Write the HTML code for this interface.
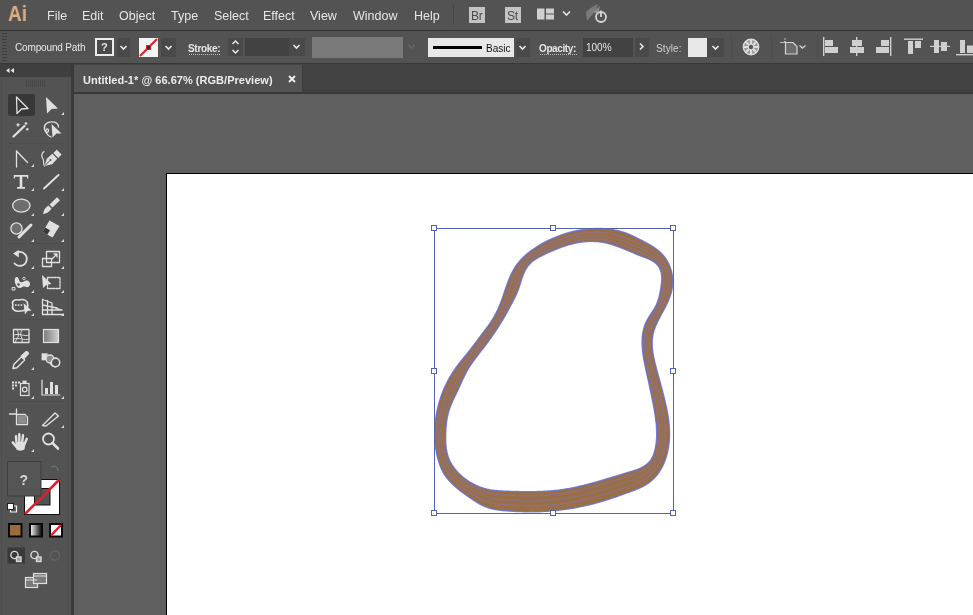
<!DOCTYPE html>
<html><head><meta charset="utf-8">
<style>
html,body{margin:0;padding:0}
.a{will-change:transform}
body{width:973px;height:615px;overflow:hidden;background:#535353;position:relative;font-family:"Liberation Sans",sans-serif;color:#e8e8e8}
.a{position:absolute}
.menu{font-size:12.5px;top:8.5px;color:#e6e6e6}
.lbl{font-size:10px;color:#e6e6e6}
svg{position:absolute;overflow:visible}
</style></head><body>
<!-- menu bar -->
<div class="a" style="left:0;top:0;width:973px;height:30px;background:#535353"></div>
<div class="a" style="left:0;top:30px;width:973px;height:1px;background:#323232"></div>
<div class="a" style="left:8px;top:1px;font-size:22px;line-height:25px;color:#dcae88;font-weight:bold;transform:scaleX(0.86);transform-origin:0 0;text-shadow:0 0 1px #8a5a3a">Ai</div>
<div class="a menu" style="left:47px">File</div>
<div class="a menu" style="left:81.5px">Edit</div>
<div class="a menu" style="left:118.5px">Object</div>
<div class="a menu" style="left:171px">Type</div>
<div class="a menu" style="left:213.5px">Select</div>
<div class="a menu" style="left:262.5px">Effect</div>
<div class="a menu" style="left:309.5px">View</div>
<div class="a menu" style="left:352.5px">Window</div>
<div class="a menu" style="left:413.5px">Help</div>

<!-- menu icons -->
<div class="a" style="left:453px;top:5px;width:1px;height:20px;background:#454545"></div>
<div class="a" style="left:469px;top:7px;width:16px;height:16px;background:#c4c4c4"></div>
<div class="a" style="left:470.5px;top:8.5px;font-size:12px;color:#4a4a4a;letter-spacing:-0.3px">Br</div>
<div class="a" style="left:505px;top:7px;width:16px;height:16px;background:#c4c4c4"></div>
<div class="a" style="left:507px;top:8.5px;font-size:12px;color:#4a4a4a;letter-spacing:-0.3px">St</div>
<svg style="left:536px;top:8px" width="40" height="14"><g fill="#cfcfcf"><rect x="1" y="0.5" width="7.5" height="11"/><rect x="10" y="0.5" width="8" height="5"/><rect x="10" y="6.5" width="8" height="5"/></g><polyline points="27,3.5 30.5,7 34,3.5" fill="none" stroke="#e6e6e6" stroke-width="1.6"/></svg>
<svg style="left:584px;top:2px" width="26" height="22"><path d="M2 10 C 6 6, 10 4, 14 2 C 13 6, 11 9, 9 12 C 7 14, 5 16, 3 19 Z" fill="#7a7a7a"/><path d="M9 10 L16 4 L14 12 Z" fill="#8c8c8c"/><circle cx="17" cy="15" r="5" fill="none" stroke="#d6d6d6" stroke-width="1.8"/><path d="M17 8.5 V15" stroke="#d6d6d6" stroke-width="1.8"/></svg>
<!-- control bar -->
<div class="a" style="left:0;top:31px;width:973px;height:32px;background:#535353"></div>
<div class="a" style="left:0;top:63px;width:973px;height:1px;background:#383838"></div>
<svg style="left:0;top:31px" width="8" height="32"><g fill="#3f3f3f"><rect x="2" y="2" width="5" height="1"/><rect x="2" y="5" width="5" height="1"/><rect x="2" y="8" width="5" height="1"/><rect x="2" y="11" width="5" height="1"/><rect x="2" y="14" width="5" height="1"/><rect x="2" y="17" width="5" height="1"/><rect x="2" y="20" width="5" height="1"/><rect x="2" y="23" width="5" height="1"/><rect x="2" y="26" width="5" height="1"/><rect x="2" y="29" width="5" height="1"/></g></svg>
<div class="a lbl" style="left:15px;top:41.5px;letter-spacing:-0.15px">Compound Path</div>
<!-- fill ? -->
<div class="a" style="left:95px;top:38px;width:15px;height:14px;border:2px solid #ececec;background:#4a4a4a"></div>
<div class="a" style="left:100.5px;top:41px;font-size:11px;font-weight:bold;color:#e4e4e4">?</div>
<div class="a" style="left:117px;top:38px;width:13px;height:19px;background:#494949"></div>
<svg style="left:119px;top:44px" width="10" height="8"><polyline points="1.5,2 4.5,5 7.5,2" fill="none" stroke="#e8e8e8" stroke-width="1.6"/></svg>
<!-- stroke swatch -->
<div class="a" style="left:139px;top:38px;width:19px;height:19px;background:#f4f4f4"></div>
<svg style="left:139px;top:38px" width="19" height="19"><line x1="1" y1="18" x2="18" y2="1" stroke="#e0202a" stroke-width="2.2"/><rect x="7.5" y="7.5" width="4" height="4" fill="#2a2a2a" stroke="#e0202a" stroke-width="1"/></svg>
<div class="a" style="left:161px;top:38px;width:15px;height:19px;background:#494949"></div>
<svg style="left:164px;top:44px" width="10" height="8"><polyline points="1.5,2 4.5,5 7.5,2" fill="none" stroke="#e8e8e8" stroke-width="1.6"/></svg>
<!-- Stroke label -->
<div class="a lbl" style="left:188px;top:42.5px;font-weight:bold;letter-spacing:-0.3px">Stroke:</div>
<div class="a" style="left:189px;top:54px;width:31px;height:0;border-top:1px dotted #bdbdbd"></div>
<div class="a" style="left:228px;top:38px;width:15px;height:18px;background:#494949"></div>
<svg style="left:231px;top:39px" width="10" height="16"><polyline points="1.5,5 4.5,2 7.5,5" fill="none" stroke="#e8e8e8" stroke-width="1.5"/><polyline points="1.5,11 4.5,14 7.5,11" fill="none" stroke="#e8e8e8" stroke-width="1.5"/></svg>
<div class="a" style="left:245px;top:38px;width:44px;height:18px;background:#424242"></div>
<div class="a" style="left:289px;top:38px;width:16px;height:18px;background:#494949"></div>
<svg style="left:292px;top:43px" width="10" height="8"><polyline points="1.5,2 4.5,5 7.5,2" fill="none" stroke="#e8e8e8" stroke-width="1.6"/></svg>
<!-- variable width field -->
<div class="a" style="left:312px;top:37px;width:91px;height:21px;background:#7a7a7a"></div>
<svg style="left:407px;top:43px" width="10" height="8"><polyline points="1.5,2 4.5,5 7.5,2" fill="none" stroke="#6a6a6a" stroke-width="1.4"/></svg>
<!-- brush -->
<div class="a" style="left:428px;top:38px;width:86px;height:19px;background:#e8e8e8"></div>
<div class="a" style="left:433px;top:46px;width:49px;height:3px;background:#000"></div>
<div class="a" style="left:486px;top:42.5px;font-size:10px;color:#111">Basic</div>
<div class="a" style="left:516px;top:38px;width:14px;height:19px;background:#494949"></div>
<svg style="left:518px;top:44px" width="10" height="8"><polyline points="1.5,2 4.5,5 7.5,2" fill="none" stroke="#e8e8e8" stroke-width="1.6"/></svg>
<!-- opacity -->
<div class="a lbl" style="left:539px;top:42.5px;font-weight:bold;letter-spacing:-0.4px">Opacity:</div>
<div class="a" style="left:540px;top:54px;width:37px;height:0;border-top:1px dotted #bdbdbd"></div>
<div class="a" style="left:583px;top:38px;width:50px;height:19px;background:#424242"></div>
<div class="a lbl" style="left:586px;top:42px;font-size:10px">100%</div>
<div class="a" style="left:635px;top:38px;width:14px;height:19px;background:#494949"></div>
<svg style="left:638px;top:42px" width="8" height="10"><polyline points="2,1.5 5,4.5 2,7.5" fill="none" stroke="#e8e8e8" stroke-width="1.6"/></svg>
<!-- style -->
<div class="a lbl" style="left:656px;top:42.5px;color:#d0d0d0;letter-spacing:0.1px">Style:</div>
<div class="a" style="left:731px;top:35px;width:1px;height:25px;background:#4c4c4c"></div>
<div class="a" style="left:688px;top:38px;width:19px;height:19px;background:#e8e8e8"></div>
<div class="a" style="left:707px;top:38px;width:17px;height:19px;background:#494949"></div>
<svg style="left:711px;top:44px" width="10" height="8"><polyline points="1.5,2 4.5,5 7.5,2" fill="none" stroke="#e8e8e8" stroke-width="1.6"/></svg>
<!-- recolor -->
<svg style="left:742px;top:38px" width="18" height="18"><circle cx="9" cy="9" r="7.7" fill="#9a9a9a" stroke="#dcdcdc" stroke-width="1.4"/>
<g stroke="#dcdcdc" stroke-width="2.2"><path d="M9 1.5 V16.5 M1.5 9 H16.5 M3.7 3.7 L14.3 14.3 M14.3 3.7 L3.7 14.3"/></g>
<circle cx="9" cy="9" r="2.2" fill="#555"/></svg>
<div class="a" style="left:771px;top:35px;width:1px;height:25px;background:#4c4c4c"></div>
<!-- transform -->
<svg style="left:778px;top:36px" width="30" height="22"><path d="M2 6.5 H6 M7 2 V4" stroke="#bdbdbd" stroke-width="1" fill="none"/><circle cx="7" cy="6" r="1" fill="#d0d0d0"/><path d="M7.5 6.5 H15 L19 10.5 V18 H7.5 Z" fill="#6c6c6c" stroke="#d4d4d4" stroke-width="1.2"/><polyline points="21.5,9.5 24.5,12 27.5,9.5" fill="none" stroke="#d0d0d0" stroke-width="1.4"/></svg>
<div class="a" style="left:817px;top:35px;width:1px;height:25px;background:#4c4c4c"></div>
<!-- align icons -->
<svg style="left:820px;top:36px" width="153" height="22" fill="#cfcfcf">
<rect x="3" y="1" width="1.4" height="19"/><rect x="5" y="4" width="8" height="6"/><rect x="5" y="11" width="13" height="6"/>
<rect x="36" y="1" width="1.4" height="19"/><rect x="32" y="4" width="10" height="6"/><rect x="30" y="11" width="14" height="6"/>
<rect x="70" y="1" width="1.4" height="19"/><rect x="61" y="4" width="8" height="6"/><rect x="56" y="11" width="13" height="6"/>
<rect x="84" y="2.5" width="19" height="1.4"/><rect x="88" y="5" width="5" height="13"/><rect x="95" y="5" width="6" height="7"/>
<rect x="110" y="9.8" width="20" height="1.2"/><rect x="114" y="4" width="5" height="13"/><rect x="121" y="6" width="6" height="9"/>
<rect x="136" y="18" width="17" height="1.4"/><rect x="140" y="4" width="5" height="13"/><rect x="147" y="9.5" width="6" height="7.5"/>
</svg>
<!-- left toolbar -->
<div class="a" style="left:0;top:64px;width:71px;height:551px;background:#535353"></div>
<div class="a" style="left:0;top:64px;width:71px;height:13px;background:#3f3f3f"></div>
<div class="a" style="left:71px;top:64px;width:3px;height:551px;background:#3a3a3a"></div>
<div class="a" style="left:8px;top:94px;width:27px;height:22px;background:#383838;border-radius:2px"></div>
<svg style="left:0;top:0" width="72" height="615">
<g fill="#e6e6e6"><path d="M6 70.5 L9.5 68 V73 Z M10.5 70.5 L14 68 V73 Z"/></g>
<g stroke="#474747" stroke-width="1"><path d="M26.5 80 V87 M28.5 80 V87 M30.5 80 V87 M32.5 80 V87 M34.5 80 V87 M36.5 80 V87 M38.5 80 V87 M40.5 80 V87 M42.5 80 V87 M44.5 80 V87"/></g>
<g stroke="#4d4d4d" stroke-width="1"><path d="M8 143.5 H64 M8 243.5 H64 M8 319.5 H64 M8 401.5 H64 M1.5 78 V615 M68.5 78 V615"/></g>
<!-- corner triangles -->
<g fill="#d8d8d8">
<path d="M64 112 V115 H61 Z M64 188 V191 H61 Z M64 213 V216 H61 Z M64 239 V242 H61 Z M64 266 V269 H61 Z M64 290 V293 H61 Z M64 313 V316 H61 Z M64 396 V399 H61 Z M64 425 V428 H61 Z M34 164 V167 H31 Z M34 188 V191 H31 Z M34 213 V216 H31 Z M34 239 V242 H31 Z M34 266 V269 H31 Z M34 290 V293 H31 Z M34 313 V316 H31 Z M34 367 V370 H31 Z M34 396 V399 H31 Z M34 449 V452 H31 Z"/>
</g>
<g fill="none" stroke="#e0e0e0" stroke-width="1.3" stroke-linejoin="round" stroke-linecap="round">
<!-- selection outline arrow -->
<path d="M16.5 97 L28 108.5 L21.5 109 L17 113.5 Z"/>
<!-- magic wand -->
<path d="M13.5 136.5 L24.5 126" stroke-width="2.2"/>
<!-- lasso loop -->
<path d="M44.5 129.5 C 43.5 124, 48 121.8, 51.5 121.8 C 55.5 121.8, 58.5 123.5, 58.5 127 M44.5 129.5 C 45 133, 48.5 133, 48.5 130.5 C 48.5 128, 45.5 128.5, 46 131.5 C 46.5 134.5, 49 136, 51 137" stroke-width="1.3"/>
<!-- pen wave -->
<path d="M44 151.5 C 41 153.5, 41.5 157, 43 159 C 44.5 161, 42.5 163.5, 44.5 166" stroke-width="1.2"/>
<!-- line-n shape -->
<path d="M16.5 151 V167 M16.5 151 L27.5 162.5"/>
<!-- line segment -->
<path d="M44 188.5 L58.5 175" stroke-width="1.9"/>
<!-- ellipse -->
<ellipse cx="21.3" cy="205.6" rx="8.7" ry="6.5" fill="#6e6e6e"/>
<!-- blob brush circle -->
<circle cx="16.5" cy="228.5" r="5.6" fill="#6e6e6e"/>
<path d="M19 237 L31 225" stroke-width="3"/>
<!-- rotate -->
<path d="M18.5 252 A 7 7 0 1 1 14.5 263.5" stroke-width="1.8"/>
<!-- scale -->
<rect x="46.5" y="251.5" width="13" height="11"/>
<rect x="42.5" y="258.5" width="9" height="8"/>
<path d="M52 259 L57 254 M54 254 H57 V257"/>
<!-- free transform -->
<rect x="47.5" y="277.5" width="12.5" height="11" stroke-dasharray="2 1.2"/>
<!-- shape builder -->
<path d="M13 305 C 11 301, 15 299, 19 300 C 23 298.5, 28 300.5, 27.5 304 C 29 307, 25 311.5, 20 311 C 15 312, 11 309, 13 305 Z" stroke-width="1.6"/><path d="M12.5 287.5 h2.5 v2.5 h-2.5 z" stroke-width="1"/>
<!-- perspective grid -->
<path d="M42.5 299.5 V314.5 H62.5 M42.5 299.5 L52 303 V314 M42.5 305 L57 308 M42.5 310 H62 M47.5 300.5 V314.5 M52 307 L62 310"/>
<!-- mesh -->
<rect x="13.5" y="329.5" width="15.5" height="13"/>
<path d="M17 330 C 20 334, 18 338, 15 342 M22 330 C 18 336, 24 338, 22 342 M14 335 C 20 333, 24 337, 29 335 M14 339 C 19 337, 24 341, 29 339" stroke-width="1"/>
<!-- eyedropper -->
<path d="M13 368.5 L13.8 364.5 L21.5 356.8 L24.7 360 L17 367.7 Z" stroke-width="1.4"/><path d="M20.5 356 L25.5 351.3 C 27.3 350.3, 29.7 352.5, 28.7 354.3 L 24 359.5 Z" fill="#e0e0e0" stroke="none"/>
<!-- blend -->
<circle cx="55" cy="362.5" r="4.3" stroke-width="1.6"/>
<!-- graph -->
<path d="M42 380 V395 H60" stroke-width="1.2"/>
<!-- artboard -->
<path d="M9.5 414 H16 M16.5 409 V414 M16.5 414.5 H25 L27.5 417 V424.5 H16.5 Z"/>
<!-- slice -->
<path d="M42.5 425.5 L55 413 L58.5 416 L46 426 Z" stroke-width="1.4"/>
<!-- zoom -->
<circle cx="48.5" cy="439" r="5.5" stroke-width="1.8"/>
<path d="M52.5 443 L58 448.5" stroke-width="2.6"/>
</g>
<g fill="#e0e0e0">
<!-- direct selection -->
<path d="M46 97 L58 108.5 L51.5 109 L47 113.5 Z"/>
<!-- stars -->
<path d="M18 122.5 L18.8 124.2 L20.5 124.8 L18.8 125.5 L18 127.2 L17.2 125.5 L15.5 124.8 L17.2 124.2 Z"/>
<circle cx="26" cy="123.5" r="1.3"/><circle cx="27.3" cy="129.3" r="1.2"/>
<!-- lasso arrow -->
<path d="M51.5 124 L61.5 133.5 L56.5 133.5 L52.5 137.5 Z"/>
<!-- pen nib -->
<path d="M44.5 166 L46.8 158.8 L52.3 153.8 L57.2 158.7 L52.2 164.2 Z"/><path d="M53.3 153 L56.8 149.8 L61.6 154.6 L58.2 158 Z"/><path d="M44.8 165.7 L49.8 160.7" stroke="#535353" stroke-width="1" fill="none"/><circle cx="50.5" cy="160" r="1.1" fill="#535353"/>
<!-- T -->
<path d="M13.8 175 H28.2 V178.5 H27 V176.8 H22.3 V187 H25 V188.7 H17 V187 H19.7 V176.8 H15 V178.5 H13.8 Z"/>
<!-- paintbrush -->
<path d="M49.5 204.5 L57 197.2 L60 200.2 L52.5 207.5 Z M48.5 205.5 L51.5 208.5 C 49.5 212, 46.5 213.8, 43 214 C 43.5 210.5, 45.5 207, 48.5 205.5 Z"/>
<!-- eraser -->
<path d="M49.5 220.6 L59.5 226 L52.5 237.5 L42.6 232 Z"/><path d="M45.3 227.5 L50 230.2 L47.3 234.8 L42.6 232 Z" fill="#3a3a3a"/>
<!-- warp -->
<path d="M13 253.5 L18.8 250 L18.8 257.5 Z"/><path d="M15.5 284 C 14 280, 15 276.5, 17 277 C 19 277.5, 18.5 281, 20.5 282 C 22.5 283, 24.5 280, 27 280.5 C 30 281, 31 284.5, 29 286.5 C 27 288.5, 24.5 285.5, 22.5 287 C 20.5 288.5, 17 289, 15.5 284 Z"/><rect x="15" y="304.3" width="1.6" height="1.6"/><rect x="17.8" y="304.3" width="1.6" height="1.6"/><rect x="20.6" y="304.3" width="1.6" height="1.6"/>
<!-- free transform arrow -->
<path d="M42 275 L51.5 284 L47 284.5 L43 288 Z"/>
<!-- shape builder arrow -->
<path d="M23.5 303 L31.5 310.5 L27.5 311 L25 314.5 Z"/>
<!-- gradient -->
<!-- blend squares -->
<rect x="41.6" y="353.3" width="6" height="7"/>
<!-- symbol sprayer dots -->
<rect x="12" y="381.5" width="2" height="2"/><rect x="15" y="381.5" width="2" height="2"/><rect x="18" y="381.5" width="2" height="2"/>
<rect x="12" y="384.5" width="2" height="2"/><rect x="15" y="384.5" width="2" height="2"/><rect x="12" y="387.5" width="2" height="2"/>
<rect x="22.5" y="380.6" width="4" height="3"/>
<!-- graph bars -->
<rect x="45" y="388" width="3" height="6"/><rect x="50" y="382" width="3" height="12"/><rect x="55" y="385" width="3" height="9"/>
<!-- slice tip -->
<!-- hand -->
<path d="M15.5 444 C 15.5 441, 25.5 441, 25.5 444 L 24.5 449.5 C 22 451, 18 451, 16.5 449.5 Z"/>
</g><g stroke="#e0e0e0" stroke-linecap="round" fill="none"><path d="M16.5 443 L16 436.2 M19.3 442 L19.3 434.3 M22.2 442 L23 435.3 M24.6 444 L26.8 438.8" stroke-width="2.4"/><path d="M16.5 447 L12.8 442.5" stroke-width="2.6"/>
</g>
<circle cx="18.5" cy="284.5" r="1.3" fill="#555"/><circle cx="24" cy="278.5" r="1.2" fill="none" stroke="#ddd" stroke-width="0.9"/>
<!-- gradient square -->
<defs><linearGradient id="gr" x1="0" x2="1"><stop offset="0" stop-color="#7a7a7a"/><stop offset="1" stop-color="#d0d0d0"/></linearGradient>
<linearGradient id="gw" x1="0" x2="1"><stop offset="0" stop-color="#fff"/><stop offset="1" stop-color="#000"/></linearGradient></defs>
<rect x="43.5" y="329.5" width="15" height="13" fill="url(#gr)" stroke="#e0e0e0" stroke-width="1.2"/>
<!-- symbol can -->
<rect x="20.5" y="383.5" width="8.5" height="12" fill="none" stroke="#e0e0e0" stroke-width="1.2"/>
<circle cx="24.7" cy="389.5" r="2.3" fill="none" stroke="#e0e0e0" stroke-width="1.2"/>
<!-- blend circle 2 -->
<circle cx="50" cy="359" r="4" fill="#8a8a8a" stroke="#e0e0e0" stroke-width="1.3"/>
<circle cx="55.5" cy="362.5" r="4.2" fill="#535353" stroke="#e0e0e0" stroke-width="1.5"/>
<!-- artboard fill -->
<rect x="17.5" y="415.5" width="9" height="8" fill="#8c8c8c"/>
<!-- fill/stroke -->
<rect x="24.5" y="479.5" width="35" height="35" fill="#fff" stroke="#111" stroke-width="1"/>
<rect x="34.5" y="488.5" width="15.5" height="16.5" fill="#535353" stroke="#111" stroke-width="1"/>
<path d="M25 514 L59.5 479.5" stroke="#e21d27" stroke-width="2.6"/>
<rect x="7.5" y="461.5" width="33.5" height="34.5" fill="#555555" stroke="#3e3e3e" stroke-width="1"/>
<text x="19.5" y="485" font-family="Liberation Sans" font-size="14" font-weight="bold" fill="#d8d8d8">?</text>
<path d="M51 467 C 55 465, 58 467, 58 471" fill="none" stroke="#707070" stroke-width="1.4"/>
<rect x="7.5" y="503.5" width="6" height="6" fill="#fff" stroke="#222" stroke-width="1"/>
<path d="M14 506 H16.5 V512 H10.5 V510" fill="none" stroke="#eee" stroke-width="1.2"/>
<!-- swatches -->
<rect x="9" y="524" width="12.5" height="12.5" fill="#9a6b3c" stroke="#0a0a0a" stroke-width="2"/>
<rect x="30" y="524" width="12" height="12.5" fill="url(#gw)" stroke="#0a0a0a" stroke-width="2"/>
<rect x="50" y="524" width="12" height="12.5" fill="#fff" stroke="#0a0a0a" stroke-width="2"/>
<path d="M51 535.5 L61 525" stroke="#e21d27" stroke-width="2.4"/>
<!-- draw modes -->
<rect x="7.5" y="547.5" width="17.5" height="16" fill="#393939"/>
<g fill="none" stroke="#dadada" stroke-width="1.4">
<circle cx="14.5" cy="555" r="3.6"/><rect x="16.5" y="557" width="4.5" height="4.5" fill="#9a9a9a"/>
<circle cx="34.5" cy="555" r="3.6"/><rect x="36.5" y="557" width="4.5" height="4.5" fill="#9a9a9a"/>
</g>
<circle cx="55" cy="555.5" r="4.5" fill="none" stroke="#646464" stroke-width="1.4"/>
<!-- screen mode -->
<rect x="25.5" y="577.5" width="12" height="10" fill="#7a7a7a" stroke="#e0e0e0" stroke-width="1.2"/>
<rect x="33.5" y="573.5" width="13" height="10" fill="#7a7a7a" stroke="#e0e0e0" stroke-width="1.2"/>
<path d="M25.5 580 H37.5 M33.5 576 H46.5" stroke="#e0e0e0" stroke-width="1"/>
</svg>
<!-- tab bar -->
<div class="a" style="left:74px;top:64px;width:899px;height:30px;background:#434343"></div>
<div class="a" style="left:74px;top:65px;width:228px;height:28px;background:#535353"></div>
<div class="a" style="left:302px;top:65px;width:1px;height:28px;background:#3d3d3d"></div>
<div class="a" style="left:303px;top:90px;width:670px;height:1px;background:#3b3b3b"></div>
<div class="a" style="left:303px;top:91px;width:670px;height:1px;background:#474747"></div>
<div class="a" style="left:74px;top:92px;width:899px;height:2px;background:#373737"></div>
<div class="a" style="left:83px;top:74px;font-size:11px;font-weight:bold;color:#ececec;letter-spacing:0.03px">Untitled-1* @ 66.67% (RGB/Preview)</div>
<svg style="left:288px;top:75px" width="8" height="8"><path d="M1 1 L7 7 M7 1 L1 7" stroke="#f0f0f0" stroke-width="1.8"/></svg>

<!-- canvas -->
<div class="a" style="left:74px;top:94px;width:899px;height:521px;background:#5f5f5f"></div>
<div class="a" style="left:166px;top:173px;width:820px;height:460px;background:#fff;border:1px solid #000"></div>

<!-- shape -->
<svg style="left:0;top:0" width="973" height="615">
<path d="M541.99 243.72 L545.18 241.99 L548.41 240.35 L551.68 238.82 L554.99 237.39 L558.33 236.06 L561.70 234.83 L565.10 233.70 L568.53 232.69 L571.99 231.78 L575.47 230.97 L578.97 230.28 L582.49 229.70 L586.03 229.24 L589.58 228.89 L593.15 228.65 L596.73 228.54 L600.32 228.54 L603.91 228.66 L607.50 228.92 L611.07 229.33 L614.61 229.89 L618.11 230.63 L621.54 231.57 L624.91 232.69 L628.23 233.98 L631.51 235.40 L634.77 236.93 L638.01 238.55 L641.26 240.20 L644.52 241.89 L647.76 243.63 L650.93 245.46 L654.01 247.40 L656.94 249.49 L659.70 251.76 L662.23 254.25 L664.51 256.96 L666.54 259.88 L668.29 262.98 L669.77 266.23 L670.96 269.60 L671.85 273.06 L672.45 276.58 L672.73 280.13 L672.69 283.69 L672.34 287.24 L671.69 290.76 L670.78 294.24 L669.61 297.67 L668.23 301.04 L666.68 304.37 L665.01 307.66 L663.27 310.93 L661.50 314.18 L659.76 317.42 L658.09 320.66 L656.54 323.92 L655.16 327.20 L654.00 330.52 L653.10 333.87 L652.51 337.28 L652.20 340.73 L652.15 344.21 L652.33 347.72 L652.71 351.26 L653.25 354.80 L653.93 358.35 L654.72 361.90 L655.59 365.43 L656.51 368.95 L657.44 372.44 L658.38 375.91 L659.33 379.36 L660.27 382.79 L661.21 386.23 L662.13 389.67 L663.04 393.13 L663.93 396.60 L664.80 400.09 L665.62 403.59 L666.39 407.11 L667.10 410.64 L667.74 414.18 L668.29 417.73 L668.76 421.28 L669.13 424.84 L669.39 428.41 L669.52 431.98 L669.52 435.55 L669.39 439.12 L669.10 442.69 L668.65 446.26 L668.03 449.82 L667.23 453.36 L666.25 456.86 L665.09 460.29 L663.74 463.64 L662.20 466.88 L660.46 470.00 L658.52 472.97 L656.38 475.76 L654.04 478.37 L651.48 480.76 L648.71 482.91 L645.75 484.84 L642.61 486.58 L639.35 488.15 L635.99 489.58 L632.56 490.92 L629.10 492.19 L625.64 493.42 L622.20 494.64 L618.80 495.84 L615.40 497.03 L612.02 498.19 L608.63 499.31 L605.24 500.40 L601.83 501.44 L598.41 502.44 L594.97 503.38 L591.51 504.28 L588.04 505.13 L584.56 505.93 L581.06 506.68 L577.55 507.38 L574.03 508.03 L570.50 508.63 L566.96 509.18 L563.41 509.67 L559.85 510.12 L556.29 510.52 L552.72 510.86 L549.14 511.15 L545.56 511.39 L541.98 511.58 L538.40 511.72 L534.81 511.80 L531.23 511.83 L527.64 511.80 L524.05 511.73 L520.46 511.62 L516.87 511.46 L513.27 511.27 L509.67 511.04 L506.06 510.77 L502.45 510.46 L498.87 510.05 L495.33 509.51 L491.86 508.80 L488.46 507.88 L485.17 506.69 L481.98 505.24 L478.88 503.57 L475.84 501.72 L472.83 499.75 L469.84 497.71 L466.84 495.63 L463.86 493.50 L460.92 491.32 L458.06 489.07 L455.29 486.73 L452.63 484.29 L450.13 481.75 L447.79 479.08 L445.64 476.27 L443.72 473.32 L442.03 470.21 L440.57 466.96 L439.31 463.61 L438.24 460.17 L437.32 456.67 L436.55 453.15 L435.92 449.60 L435.41 446.04 L435.04 442.47 L434.79 438.89 L434.67 435.30 L434.67 431.71 L434.80 428.12 L435.04 424.54 L435.40 420.96 L435.87 417.40 L436.45 413.85 L437.15 410.33 L437.95 406.82 L438.86 403.35 L439.88 399.90 L441.00 396.49 L442.23 393.12 L443.56 389.79 L445.00 386.50 L446.54 383.27 L448.18 380.09 L449.93 376.96 L451.77 373.90 L453.72 370.90 L455.76 367.97 L457.89 365.10 L460.08 362.27 L462.32 359.48 L464.58 356.69 L466.84 353.91 L469.09 351.12 L471.30 348.30 L473.48 345.45 L475.63 342.59 L477.78 339.71 L479.93 336.83 L482.09 333.97 L484.26 331.11 L486.42 328.24 L488.53 325.35 L490.55 322.42 L492.47 319.44 L494.27 316.39 L495.96 313.27 L497.53 310.09 L498.99 306.84 L500.35 303.52 L501.61 300.14 L502.82 296.72 L503.99 293.28 L505.15 289.83 L506.33 286.40 L507.55 282.99 L508.84 279.63 L510.22 276.34 L511.72 273.12 L513.36 270.00 L515.18 266.99 L517.19 264.11 L519.40 261.37 L521.78 258.75 L524.32 256.26 L527.00 253.89 L529.81 251.64 L532.73 249.50 L535.75 247.47 L538.84 245.54Z M541.70 255.79 L542.85 255.20 L544.02 254.63 L545.19 254.05 L546.37 253.49 L547.56 252.93 L548.75 252.37 L549.95 251.83 L551.16 251.29 L552.37 250.77 L553.59 250.25 L554.81 249.74 L556.04 249.25 L557.27 248.76 L558.51 248.28 L559.75 247.82 L560.99 247.37 L562.24 246.93 L563.49 246.50 L564.75 246.09 L566.01 245.70 L567.27 245.31 L568.53 244.94 L569.80 244.59 L571.07 244.25 L572.34 243.93 L573.61 243.63 L574.88 243.34 L576.16 243.07 L577.43 242.82 L578.71 242.59 L579.99 242.38 L581.26 242.18 L582.54 242.01 L583.82 241.86 L585.09 241.73 L586.37 241.62 L587.64 241.53 L588.92 241.46 L590.19 241.42 L591.46 241.40 L592.73 241.40 L594.00 241.43 L595.26 241.48 L596.52 241.56 L597.78 241.66 L599.03 241.79 L600.29 241.95 L601.54 242.13 L602.78 242.34 L604.02 242.58 L605.26 242.84 L606.50 243.12 L607.73 243.42 L608.96 243.75 L610.19 244.09 L611.42 244.45 L612.64 244.83 L613.87 245.23 L615.09 245.64 L616.32 246.07 L617.54 246.51 L618.76 246.96 L619.98 247.43 L621.20 247.90 L622.43 248.38 L623.65 248.87 L624.87 249.37 L626.10 249.88 L627.32 250.39 L628.55 250.90 L629.78 251.41 L631.01 251.93 L632.25 252.45 L633.48 252.96 L634.72 253.48 L635.96 253.99 L637.21 254.50 L638.46 255.01 L639.71 255.50 L640.97 255.99 L642.23 256.48 L643.49 256.96 L644.74 257.44 L645.99 257.92 L647.22 258.42 L648.43 258.94 L649.62 259.47 L650.78 260.04 L651.90 260.64 L652.99 261.27 L654.02 261.96 L655.01 262.69 L655.95 263.47 L656.82 264.31 L657.63 265.22 L658.37 266.20 L659.04 267.24 L659.64 268.33 L660.17 269.47 L660.62 270.65 L661.00 271.87 L661.31 273.12 L661.54 274.39 L661.69 275.69 L661.78 276.99 L661.81 278.31 L661.78 279.64 L661.71 280.98 L661.60 282.32 L661.45 283.66 L661.28 285.00 L661.09 286.33 L660.88 287.66 L660.66 288.97 L660.44 290.27 L660.21 291.56 L659.96 292.83 L659.70 294.10 L659.42 295.35 L659.12 296.59 L658.80 297.82 L658.45 299.04 L658.07 300.25 L657.65 301.45 L657.21 302.64 L656.72 303.82 L656.20 304.99 L655.63 306.16 L655.01 307.31 L654.36 308.46 L653.67 309.60 L652.96 310.74 L652.23 311.87 L651.49 313.01 L650.75 314.14 L650.01 315.28 L649.29 316.41 L648.58 317.56 L647.90 318.71 L647.26 319.86 L646.65 321.02 L646.09 322.19 L645.57 323.37 L645.10 324.56 L644.66 325.76 L644.26 326.96 L643.90 328.17 L643.57 329.39 L643.28 330.61 L643.03 331.84 L642.81 333.08 L642.62 334.32 L642.46 335.57 L642.33 336.82 L642.23 338.08 L642.16 339.34 L642.11 340.61 L642.10 341.88 L642.10 343.15 L642.13 344.43 L642.18 345.71 L642.26 346.99 L642.35 348.28 L642.46 349.56 L642.59 350.85 L642.74 352.15 L642.91 353.44 L643.09 354.73 L643.28 356.03 L643.49 357.32 L643.70 358.62 L643.93 359.91 L644.17 361.20 L644.42 362.50 L644.67 363.79 L644.93 365.08 L645.20 366.37 L645.47 367.66 L645.74 368.95 L646.01 370.23 L646.29 371.51 L646.57 372.79 L646.84 374.06 L647.12 375.34 L647.40 376.61 L647.68 377.88 L647.96 379.14 L648.23 380.41 L648.51 381.67 L648.79 382.94 L649.07 384.20 L649.34 385.46 L649.61 386.72 L649.89 387.98 L650.16 389.24 L650.43 390.49 L650.70 391.75 L650.96 393.01 L651.22 394.27 L651.48 395.52 L651.74 396.78 L652.00 398.04 L652.25 399.30 L652.50 400.55 L652.75 401.81 L652.99 403.08 L653.23 404.34 L653.46 405.60 L653.70 406.86 L653.92 408.13 L654.14 409.40 L654.36 410.67 L654.58 411.94 L654.78 413.21 L654.99 414.49 L655.18 415.77 L655.37 417.05 L655.55 418.33 L655.72 419.61 L655.88 420.90 L656.03 422.19 L656.17 423.48 L656.29 424.77 L656.40 426.06 L656.49 427.36 L656.57 428.65 L656.64 429.95 L656.68 431.25 L656.71 432.55 L656.72 433.86 L656.71 435.16 L656.67 436.47 L656.62 437.78 L656.54 439.09 L656.44 440.40 L656.32 441.71 L656.17 443.03 L655.99 444.34 L655.79 445.66 L655.55 446.98 L655.29 448.30 L655.00 449.61 L654.67 450.92 L654.31 452.21 L653.91 453.48 L653.46 454.72 L652.97 455.93 L652.44 457.10 L651.85 458.22 L651.21 459.30 L650.51 460.32 L649.76 461.28 L648.96 462.18 L648.10 463.04 L647.20 463.84 L646.26 464.61 L645.28 465.32 L644.25 466.00 L643.19 466.64 L642.10 467.24 L640.97 467.81 L639.82 468.35 L638.64 468.86 L637.44 469.34 L636.22 469.81 L634.98 470.25 L633.73 470.68 L632.46 471.09 L631.19 471.49 L629.91 471.88 L628.62 472.27 L627.33 472.65 L626.04 473.03 L624.76 473.41 L623.48 473.79 L622.20 474.17 L620.92 474.56 L619.65 474.94 L618.38 475.32 L617.11 475.71 L615.85 476.09 L614.59 476.47 L613.33 476.86 L612.07 477.24 L610.82 477.62 L609.56 478.00 L608.31 478.38 L607.06 478.76 L605.81 479.13 L604.57 479.50 L603.32 479.87 L602.08 480.24 L600.83 480.61 L599.59 480.97 L598.35 481.33 L597.11 481.69 L595.87 482.05 L594.63 482.40 L593.39 482.74 L592.15 483.09 L590.92 483.42 L589.68 483.76 L588.44 484.09 L587.20 484.41 L585.96 484.73 L584.72 485.05 L583.48 485.36 L582.24 485.66 L581.00 485.96 L579.75 486.25 L578.51 486.54 L577.26 486.81 L576.02 487.09 L574.77 487.35 L573.52 487.61 L572.27 487.86 L571.01 488.11 L569.76 488.35 L568.50 488.58 L567.24 488.80 L565.98 489.01 L564.71 489.21 L563.44 489.41 L562.17 489.60 L560.90 489.78 L559.62 489.94 L558.35 490.10 L557.06 490.26 L555.78 490.40 L554.49 490.53 L553.20 490.66 L551.91 490.77 L550.62 490.88 L549.32 490.98 L548.02 491.07 L546.72 491.16 L545.42 491.24 L544.12 491.31 L542.81 491.37 L541.51 491.43 L540.20 491.48 L538.89 491.53 L537.59 491.57 L536.28 491.60 L534.97 491.63 L533.66 491.65 L532.35 491.67 L531.04 491.68 L529.73 491.69 L528.42 491.69 L527.11 491.68 L525.80 491.68 L524.49 491.67 L523.18 491.65 L521.88 491.63 L520.57 491.61 L519.26 491.59 L517.96 491.56 L516.66 491.53 L515.36 491.49 L514.06 491.45 L512.76 491.42 L511.47 491.37 L510.17 491.33 L508.88 491.29 L507.60 491.24 L506.31 491.19 L505.03 491.14 L503.75 491.08 L502.47 491.02 L501.19 490.95 L499.92 490.87 L498.65 490.78 L497.38 490.67 L496.11 490.55 L494.85 490.41 L493.58 490.26 L492.33 490.08 L491.07 489.89 L489.81 489.67 L488.56 489.42 L487.31 489.15 L486.06 488.84 L484.81 488.51 L483.57 488.15 L482.33 487.76 L481.10 487.34 L479.87 486.89 L478.64 486.42 L477.43 485.91 L476.22 485.38 L475.03 484.82 L473.84 484.23 L472.67 483.62 L471.51 482.98 L470.36 482.32 L469.23 481.63 L468.11 480.91 L467.01 480.18 L465.93 479.41 L464.86 478.63 L463.82 477.82 L462.79 476.99 L461.79 476.14 L460.80 475.26 L459.84 474.36 L458.91 473.45 L458.00 472.51 L457.12 471.55 L456.26 470.57 L455.43 469.57 L454.63 468.56 L453.86 467.52 L453.12 466.47 L452.41 465.40 L451.74 464.31 L451.10 463.20 L450.49 462.08 L449.92 460.94 L449.39 459.79 L448.89 458.62 L448.43 457.43 L448.01 456.23 L447.63 455.02 L447.29 453.79 L446.99 452.55 L446.73 451.30 L446.50 450.04 L446.30 448.77 L446.13 447.49 L445.99 446.20 L445.88 444.91 L445.79 443.60 L445.72 442.30 L445.67 440.99 L445.65 439.67 L445.64 438.36 L445.64 437.04 L445.66 435.72 L445.69 434.40 L445.73 433.08 L445.78 431.76 L445.84 430.45 L445.91 429.14 L445.99 427.83 L446.09 426.52 L446.20 425.22 L446.33 423.92 L446.48 422.63 L446.64 421.34 L446.83 420.06 L447.04 418.78 L447.26 417.51 L447.51 416.25 L447.79 414.99 L448.09 413.74 L448.42 412.50 L448.77 411.27 L449.15 410.05 L449.56 408.83 L449.99 407.62 L450.44 406.41 L450.92 405.22 L451.41 404.02 L451.91 402.83 L452.43 401.65 L452.96 400.47 L453.50 399.29 L454.05 398.11 L454.61 396.94 L455.17 395.76 L455.74 394.59 L456.30 393.42 L456.86 392.24 L457.42 391.07 L457.98 389.89 L458.53 388.71 L459.07 387.53 L459.61 386.34 L460.15 385.16 L460.69 383.97 L461.22 382.79 L461.76 381.61 L462.30 380.43 L462.85 379.26 L463.40 378.09 L463.96 376.92 L464.53 375.77 L465.11 374.61 L465.70 373.47 L466.31 372.33 L466.93 371.20 L467.56 370.08 L468.21 368.97 L468.88 367.87 L469.56 366.78 L470.26 365.69 L470.97 364.62 L471.69 363.55 L472.43 362.49 L473.18 361.44 L473.93 360.39 L474.69 359.34 L475.47 358.30 L476.25 357.27 L477.03 356.23 L477.82 355.20 L478.61 354.18 L479.41 353.15 L480.20 352.12 L481.00 351.10 L481.80 350.07 L482.60 349.05 L483.39 348.02 L484.19 346.99 L484.98 345.96 L485.76 344.92 L486.54 343.89 L487.32 342.85 L488.09 341.80 L488.85 340.76 L489.61 339.71 L490.37 338.66 L491.12 337.60 L491.87 336.54 L492.61 335.48 L493.35 334.42 L494.08 333.35 L494.81 332.28 L495.53 331.21 L496.25 330.13 L496.96 329.05 L497.67 327.97 L498.37 326.88 L499.06 325.79 L499.75 324.70 L500.44 323.60 L501.12 322.50 L501.79 321.39 L502.46 320.29 L503.12 319.17 L503.77 318.06 L504.42 316.94 L505.07 315.82 L505.71 314.69 L506.34 313.56 L506.97 312.43 L507.59 311.30 L508.21 310.16 L508.83 309.03 L509.44 307.89 L510.05 306.75 L510.65 305.60 L511.25 304.46 L511.85 303.31 L512.45 302.17 L513.05 301.02 L513.64 299.88 L514.22 298.73 L514.80 297.57 L515.36 296.41 L515.91 295.25 L516.45 294.08 L516.97 292.90 L517.47 291.71 L517.95 290.51 L518.41 289.31 L518.84 288.09 L519.26 286.86 L519.66 285.62 L520.05 284.38 L520.44 283.13 L520.82 281.88 L521.21 280.64 L521.61 279.39 L522.02 278.14 L522.45 276.91 L522.90 275.67 L523.38 274.45 L523.89 273.24 L524.43 272.04 L525.01 270.86 L525.63 269.71 L526.28 268.58 L526.98 267.48 L527.71 266.42 L528.48 265.40 L529.30 264.42 L530.15 263.50 L531.05 262.63 L531.99 261.80 L532.97 261.02 L533.98 260.27 L535.02 259.56 L536.08 258.88 L537.17 258.23 L538.28 257.60 L539.40 256.98 L540.54 256.38Z" fill="#9a6f46" fill-rule="evenodd"/>
<g fill="none" stroke-width="1.5" opacity="0.45">
<path d="M543.41 246.66 L546.56 245.03 L549.70 243.50 L552.93 242.04 L556.15 240.69 L559.44 239.41 L562.72 238.25 L566.06 237.17 L569.39 236.20 L572.78 235.34 L576.15 234.59 L579.54 233.95 L582.90 233.43 L586.26 233.02 L589.68 232.73 L593.11 232.56 L596.54 232.52 L599.89 232.59 L603.23 232.80 L606.57 233.14 L609.97 233.63 L613.34 234.28 L616.72 235.09 L620.03 236.05 L623.33 237.17 L626.55 238.40 L629.80 239.77 L633.02 241.21 L636.33 242.76 L639.64 244.34 L642.95 245.94 L646.15 247.56 L649.27 249.21 L652.21 250.93 L654.98 252.76 L657.55 254.75 L659.91 256.93 L662.03 259.31 L663.89 261.87 L665.47 264.57 L666.76 267.40 L667.79 270.38 L668.56 273.50 L669.05 276.73 L669.26 280.00 L669.18 283.32 L668.84 286.68 L668.26 290.10 L667.46 293.48 L666.45 296.85 L665.26 300.12 L663.92 303.34 L662.45 306.49 L660.86 309.59 L659.18 312.72 L657.45 315.87 L655.71 319.14 L654.04 322.50 L652.52 326.01 L651.26 329.61 L650.31 333.30 L649.68 337.01 L649.35 340.67 L649.29 344.29 L649.46 347.90 L649.82 351.53 L650.35 355.17 L651.00 358.82 L651.75 362.46 L652.58 366.09 L653.44 369.66 L654.32 373.17 L655.20 376.61 L656.09 380.09 L656.98 383.55 L657.86 387.01 L658.72 390.43 L659.56 393.85 L660.39 397.29 L661.18 400.74 L661.95 404.25 L662.67 407.76 L663.34 411.29 L663.94 414.75 L664.46 418.21 L664.89 421.64 L665.23 425.13 L665.47 428.57 L665.59 432.02 L665.59 435.44 L665.45 438.85 L665.17 442.27 L664.74 445.68 L664.14 449.09 L663.37 452.46 L662.46 455.71 L661.39 458.80 L660.17 461.72 L658.75 464.55 L657.15 467.25 L655.36 469.80 L653.42 472.15 L651.25 474.35 L648.87 476.38 L646.28 478.25 L643.52 479.94 L640.58 481.47 L637.48 482.87 L634.21 484.19 L630.85 485.44 L627.41 486.65 L623.98 487.83 L620.56 488.99 L617.12 490.15 L613.70 491.29 L610.28 492.41 L606.91 493.50 L603.54 494.55 L600.16 495.56 L596.77 496.53 L593.37 497.46 L589.96 498.35 L586.58 499.19 L583.19 499.97 L579.79 500.71 L576.33 501.41 L572.87 502.06 L569.43 502.66 L565.98 503.20 L562.56 503.68 L559.09 504.12 L555.66 504.50 L552.17 504.83 L548.72 505.10 L545.21 505.33 L541.75 505.51 L538.24 505.64 L534.73 505.72 L531.17 505.75 L527.61 505.74 L524.10 505.69 L520.58 505.59 L517.06 505.47 L513.46 505.30 L509.86 505.11 L506.27 504.87 L502.77 504.59 L499.29 504.23 L495.89 503.75 L492.54 503.13 L489.33 502.35 L486.24 501.37 L483.25 500.20 L480.32 498.84 L477.44 497.33 L474.55 495.67 L471.65 493.90 L468.73 492.04 L465.88 490.12 L463.09 488.12 L460.38 486.03 L457.72 483.82 L455.21 481.54 L452.83 479.15 L450.62 476.64 L448.55 473.97 L446.70 471.21 L445.08 468.36 L443.66 465.39 L442.41 462.29 L441.33 459.07 L440.43 455.82 L439.69 452.53 L439.11 449.21 L438.65 445.77 L438.32 442.32 L438.12 438.81 L438.04 435.34 L438.07 431.82 L438.21 428.34 L438.45 424.84 L438.81 421.39 L439.27 417.96 L439.85 414.59 L440.54 411.25 L441.37 407.89 L442.31 404.57 L443.37 401.24 L444.53 397.98 L445.80 394.72 L447.15 391.48 L448.62 388.21 L450.16 384.96 L451.76 381.75 L453.42 378.63 L455.15 375.54 L456.96 372.52 L458.84 369.58 L460.80 366.70 L462.80 363.90 L464.89 361.11 L467.00 358.37 L469.15 355.61 L471.31 352.85 L473.51 350.02 L475.70 347.17 L477.87 344.31 L480.01 341.48 L482.17 338.60 L484.34 335.69 L486.53 332.73 L488.69 329.76 L490.77 326.80 L492.77 323.84 L494.66 320.87 L496.49 317.82 L498.24 314.67 L499.92 311.43 L501.50 308.18 L502.97 304.91 L504.35 301.64 L505.70 298.30 L507.05 294.87 L508.41 291.33 L509.74 287.75 L511.05 284.20 L512.34 280.75 L513.65 277.46 L515.01 274.35 L516.47 271.40 L518.10 268.54 L519.92 265.77 L521.94 263.09 L524.12 260.59 L526.44 258.26 L528.88 256.11 L531.49 254.07 L534.28 252.11 L537.24 250.21 L540.31 248.38Z" stroke="#8a72b8"/>
<path d="M544.57 249.07 L547.68 247.51 L550.76 246.07 L553.95 244.67 L557.09 243.38 L560.34 242.15 L563.55 241.04 L566.85 240.00 L570.09 239.08 L573.43 238.24 L576.71 237.54 L580.00 236.94 L583.22 236.46 L586.45 236.11 L589.76 235.87 L593.07 235.76 L596.38 235.77 L599.53 235.90 L602.67 236.17 L605.80 236.57 L609.07 237.14 L612.31 237.84 L615.61 238.70 L618.80 239.68 L622.04 240.81 L625.18 242.02 L628.38 243.34 L631.58 244.74 L634.93 246.24 L638.28 247.76 L641.65 249.29 L644.85 250.78 L647.93 252.28 L650.79 253.79 L653.45 255.39 L655.87 257.12 L658.11 259.03 L660.11 261.16 L661.84 263.43 L663.27 265.82 L664.41 268.30 L665.32 270.99 L665.98 273.84 L666.40 276.84 L666.54 279.88 L666.43 283.02 L666.10 286.23 L665.54 289.58 L664.83 292.88 L663.93 296.20 L662.89 299.38 L661.69 302.51 L660.35 305.52 L658.87 308.49 L657.23 311.51 L655.49 314.58 L653.65 317.86 L651.86 321.30 L650.19 325.00 L648.84 328.83 L647.81 332.80 L647.16 336.76 L646.83 340.61 L646.78 344.35 L646.96 348.04 L647.33 351.75 L647.85 355.48 L648.50 359.21 L649.24 362.93 L650.05 366.65 L650.88 370.27 L651.72 373.79 L652.55 377.21 L653.39 380.70 L654.24 384.18 L655.07 387.65 L655.88 391.05 L656.67 394.45 L657.45 397.86 L658.19 401.28 L658.92 404.78 L659.61 408.30 L660.25 411.83 L660.81 415.22 L661.31 418.61 L661.72 421.94 L662.05 425.36 L662.27 428.71 L662.39 432.06 L662.39 435.34 L662.26 438.62 L661.99 441.91 L661.58 445.20 L661.01 448.48 L660.26 451.74 L659.40 454.79 L658.41 457.61 L657.31 460.17 L655.98 462.67 L654.50 465.03 L652.84 467.25 L651.06 469.25 L649.05 471.12 L646.81 472.87 L644.36 474.49 L641.76 475.95 L638.95 477.30 L635.98 478.55 L632.77 479.75 L629.44 480.91 L626.01 482.06 L622.59 483.18 L619.19 484.29 L615.72 485.41 L612.27 486.53 L608.84 487.62 L605.48 488.67 L602.13 489.69 L598.78 490.69 L595.42 491.64 L592.05 492.56 L588.68 493.44 L585.38 494.26 L582.06 495.04 L578.74 495.77 L575.32 496.47 L571.90 497.12 L568.54 497.71 L565.17 498.25 L561.86 498.72 L558.47 499.14 L555.13 499.51 L551.71 499.83 L548.36 500.09 L544.92 500.31 L541.56 500.48 L538.11 500.60 L534.66 500.68 L531.12 500.72 L527.59 500.71 L524.13 500.67 L520.68 500.60 L517.23 500.49 L513.63 500.35 L510.03 500.18 L506.44 499.99 L503.02 499.75 L499.62 499.45 L496.33 499.05 L493.07 498.53 L490.01 497.88 L487.07 497.08 L484.25 496.11 L481.48 494.99 L478.75 493.73 L475.97 492.32 L473.15 490.76 L470.29 489.07 L467.54 487.33 L464.86 485.49 L462.26 483.54 L459.68 481.45 L457.27 479.31 L455.00 477.05 L452.87 474.68 L450.86 472.13 L449.06 469.54 L447.49 466.90 L446.12 464.15 L444.89 461.24 L443.82 458.18 L442.94 455.13 L442.23 452.03 L441.69 448.89 L441.28 445.56 L440.99 442.20 L440.83 438.75 L440.78 435.37 L440.84 431.90 L440.98 428.53 L441.24 425.08 L441.59 421.74 L442.05 418.41 L442.62 415.19 L443.31 412.00 L444.15 408.77 L445.12 405.57 L446.23 402.33 L447.41 399.20 L448.71 396.03 L450.09 392.87 L451.58 389.60 L453.12 386.34 L454.69 383.11 L456.28 379.98 L457.91 376.88 L459.61 373.82 L461.36 370.89 L463.18 368.01 L465.05 365.25 L467.03 362.46 L469.01 359.77 L471.08 357.03 L473.17 354.31 L475.37 351.47 L477.56 348.62 L479.75 345.76 L481.87 342.95 L484.03 340.07 L486.21 337.12 L488.43 334.09 L490.60 331.04 L492.69 328.03 L494.68 325.05 L496.55 322.10 L498.40 319.04 L500.20 315.87 L501.98 312.59 L503.64 309.33 L505.20 306.11 L506.67 302.92 L508.13 299.64 L509.61 296.19 L511.11 292.57 L512.57 288.85 L513.93 285.18 L515.21 281.65 L516.44 278.35 L517.67 275.32 L518.97 272.50 L520.42 269.77 L522.08 267.08 L523.97 264.45 L525.98 262.05 L528.12 259.87 L530.37 257.90 L532.82 256.04 L535.51 254.22 L538.44 252.43 L541.51 250.69Z" stroke="#7d78a8"/>
<path d="M545.74 251.47 L548.81 250.00 L551.82 248.64 L554.97 247.30 L558.04 246.07 L561.25 244.89 L564.38 243.83 L567.63 242.83 L570.80 241.95 L574.08 241.15 L577.27 240.49 L580.47 239.93 L583.55 239.50 L586.64 239.19 L589.84 239.01 L593.03 238.95 L596.22 239.02 L599.17 239.21 L602.11 239.54 L605.04 240.00 L608.17 240.64 L611.28 241.40 L614.49 242.32 L617.57 243.32 L620.74 244.45 L623.80 245.63 L626.96 246.92 L630.13 248.26 L633.52 249.72 L636.93 251.18 L640.35 252.64 L643.54 254.00 L646.60 255.34 L649.36 256.65 L651.91 258.02 L654.20 259.49 L656.31 261.14 L658.19 263.00 L659.78 264.98 L661.07 267.06 L662.07 269.21 L662.85 271.59 L663.41 274.18 L663.74 276.94 L663.83 279.76 L663.68 282.71 L663.35 285.78 L662.83 289.05 L662.20 292.27 L661.41 295.55 L660.51 298.64 L659.46 301.68 L658.25 304.56 L656.88 307.39 L655.28 310.30 L653.52 313.28 L651.59 316.58 L649.67 320.10 L647.87 323.99 L646.41 328.05 L645.32 332.30 L644.64 336.51 L644.31 340.55 L644.27 344.40 L644.47 348.18 L644.84 351.98 L645.35 355.78 L645.99 359.60 L646.72 363.40 L647.51 367.20 L648.32 370.87 L649.11 374.41 L649.89 377.81 L650.70 381.32 L651.50 384.81 L652.29 388.30 L653.04 391.67 L653.78 395.05 L654.51 398.43 L655.20 401.81 L655.89 405.32 L656.55 408.84 L657.16 412.37 L657.69 415.68 L658.16 419.01 L658.55 422.24 L658.86 425.59 L659.08 428.84 L659.19 432.10 L659.19 435.24 L659.07 438.40 L658.81 441.56 L658.42 444.73 L657.87 447.88 L657.15 451.02 L656.34 453.87 L655.44 456.42 L654.44 458.63 L653.22 460.79 L651.85 462.82 L650.32 464.70 L648.70 466.34 L646.84 467.89 L644.75 469.35 L642.44 470.73 L639.99 471.97 L637.33 473.13 L634.47 474.23 L631.32 475.32 L628.03 476.39 L624.61 477.47 L621.20 478.53 L617.81 479.59 L614.32 480.68 L610.85 481.76 L607.39 482.83 L604.06 483.85 L600.72 484.84 L597.39 485.81 L594.06 486.75 L590.73 487.66 L587.40 488.53 L584.17 489.34 L580.93 490.11 L577.68 490.83 L574.32 491.53 L570.94 492.18 L567.66 492.77 L564.36 493.29 L561.16 493.75 L557.84 494.17 L554.61 494.52 L551.26 494.83 L548.01 495.07 L544.63 495.28 L541.37 495.44 L537.98 495.56 L534.59 495.64 L531.08 495.68 L527.56 495.69 L524.17 495.66 L520.78 495.60 L517.40 495.51 L513.79 495.40 L510.20 495.26 L506.61 495.10 L503.27 494.91 L499.95 494.67 L496.76 494.35 L493.59 493.93 L490.68 493.41 L487.90 492.78 L485.26 492.03 L482.65 491.15 L480.06 490.14 L477.40 488.96 L474.66 487.61 L471.85 486.10 L469.20 484.54 L466.63 482.86 L464.14 481.06 L461.64 479.08 L459.33 477.08 L457.16 474.96 L455.13 472.72 L453.16 470.30 L451.42 467.87 L449.90 465.43 L448.57 462.90 L447.37 460.18 L446.30 457.29 L445.44 454.44 L444.77 451.53 L444.28 448.57 L443.90 445.34 L443.66 442.08 L443.54 438.69 L443.52 435.40 L443.60 431.99 L443.76 428.71 L444.02 425.33 L444.37 422.09 L444.82 418.87 L445.39 415.79 L446.08 412.76 L446.94 409.65 L447.93 406.57 L449.08 403.43 L450.29 400.42 L451.63 397.33 L453.02 394.26 L454.54 390.99 L456.08 387.73 L457.62 384.47 L459.13 381.33 L460.67 378.21 L462.27 375.13 L463.88 372.20 L465.57 369.32 L467.30 366.59 L469.16 363.81 L471.03 361.16 L473.01 358.46 L475.04 355.77 L477.23 352.91 L479.43 350.06 L481.62 347.20 L483.73 344.42 L485.89 341.54 L488.09 338.55 L490.32 335.44 L492.52 332.31 L494.61 329.25 L496.58 326.26 L498.44 323.33 L500.31 320.27 L502.17 317.08 L504.03 313.75 L505.78 310.49 L507.43 307.30 L508.99 304.20 L510.55 300.97 L512.17 297.51 L513.81 293.81 L515.39 289.96 L516.81 286.16 L518.09 282.54 L519.24 279.24 L520.34 276.29 L521.46 273.60 L522.75 270.99 L524.25 268.39 L525.99 265.82 L527.84 263.51 L529.81 261.47 L531.86 259.69 L534.15 258.00 L536.75 256.33 L539.64 254.65 L542.71 253.00Z" stroke="#8a72b8"/>
</g>
<path d="M541.99 243.72 L545.18 241.99 L548.41 240.35 L551.68 238.82 L554.99 237.39 L558.33 236.06 L561.70 234.83 L565.10 233.70 L568.53 232.69 L571.99 231.78 L575.47 230.97 L578.97 230.28 L582.49 229.70 L586.03 229.24 L589.58 228.89 L593.15 228.65 L596.73 228.54 L600.32 228.54 L603.91 228.66 L607.50 228.92 L611.07 229.33 L614.61 229.89 L618.11 230.63 L621.54 231.57 L624.91 232.69 L628.23 233.98 L631.51 235.40 L634.77 236.93 L638.01 238.55 L641.26 240.20 L644.52 241.89 L647.76 243.63 L650.93 245.46 L654.01 247.40 L656.94 249.49 L659.70 251.76 L662.23 254.25 L664.51 256.96 L666.54 259.88 L668.29 262.98 L669.77 266.23 L670.96 269.60 L671.85 273.06 L672.45 276.58 L672.73 280.13 L672.69 283.69 L672.34 287.24 L671.69 290.76 L670.78 294.24 L669.61 297.67 L668.23 301.04 L666.68 304.37 L665.01 307.66 L663.27 310.93 L661.50 314.18 L659.76 317.42 L658.09 320.66 L656.54 323.92 L655.16 327.20 L654.00 330.52 L653.10 333.87 L652.51 337.28 L652.20 340.73 L652.15 344.21 L652.33 347.72 L652.71 351.26 L653.25 354.80 L653.93 358.35 L654.72 361.90 L655.59 365.43 L656.51 368.95 L657.44 372.44 L658.38 375.91 L659.33 379.36 L660.27 382.79 L661.21 386.23 L662.13 389.67 L663.04 393.13 L663.93 396.60 L664.80 400.09 L665.62 403.59 L666.39 407.11 L667.10 410.64 L667.74 414.18 L668.29 417.73 L668.76 421.28 L669.13 424.84 L669.39 428.41 L669.52 431.98 L669.52 435.55 L669.39 439.12 L669.10 442.69 L668.65 446.26 L668.03 449.82 L667.23 453.36 L666.25 456.86 L665.09 460.29 L663.74 463.64 L662.20 466.88 L660.46 470.00 L658.52 472.97 L656.38 475.76 L654.04 478.37 L651.48 480.76 L648.71 482.91 L645.75 484.84 L642.61 486.58 L639.35 488.15 L635.99 489.58 L632.56 490.92 L629.10 492.19 L625.64 493.42 L622.20 494.64 L618.80 495.84 L615.40 497.03 L612.02 498.19 L608.63 499.31 L605.24 500.40 L601.83 501.44 L598.41 502.44 L594.97 503.38 L591.51 504.28 L588.04 505.13 L584.56 505.93 L581.06 506.68 L577.55 507.38 L574.03 508.03 L570.50 508.63 L566.96 509.18 L563.41 509.67 L559.85 510.12 L556.29 510.52 L552.72 510.86 L549.14 511.15 L545.56 511.39 L541.98 511.58 L538.40 511.72 L534.81 511.80 L531.23 511.83 L527.64 511.80 L524.05 511.73 L520.46 511.62 L516.87 511.46 L513.27 511.27 L509.67 511.04 L506.06 510.77 L502.45 510.46 L498.87 510.05 L495.33 509.51 L491.86 508.80 L488.46 507.88 L485.17 506.69 L481.98 505.24 L478.88 503.57 L475.84 501.72 L472.83 499.75 L469.84 497.71 L466.84 495.63 L463.86 493.50 L460.92 491.32 L458.06 489.07 L455.29 486.73 L452.63 484.29 L450.13 481.75 L447.79 479.08 L445.64 476.27 L443.72 473.32 L442.03 470.21 L440.57 466.96 L439.31 463.61 L438.24 460.17 L437.32 456.67 L436.55 453.15 L435.92 449.60 L435.41 446.04 L435.04 442.47 L434.79 438.89 L434.67 435.30 L434.67 431.71 L434.80 428.12 L435.04 424.54 L435.40 420.96 L435.87 417.40 L436.45 413.85 L437.15 410.33 L437.95 406.82 L438.86 403.35 L439.88 399.90 L441.00 396.49 L442.23 393.12 L443.56 389.79 L445.00 386.50 L446.54 383.27 L448.18 380.09 L449.93 376.96 L451.77 373.90 L453.72 370.90 L455.76 367.97 L457.89 365.10 L460.08 362.27 L462.32 359.48 L464.58 356.69 L466.84 353.91 L469.09 351.12 L471.30 348.30 L473.48 345.45 L475.63 342.59 L477.78 339.71 L479.93 336.83 L482.09 333.97 L484.26 331.11 L486.42 328.24 L488.53 325.35 L490.55 322.42 L492.47 319.44 L494.27 316.39 L495.96 313.27 L497.53 310.09 L498.99 306.84 L500.35 303.52 L501.61 300.14 L502.82 296.72 L503.99 293.28 L505.15 289.83 L506.33 286.40 L507.55 282.99 L508.84 279.63 L510.22 276.34 L511.72 273.12 L513.36 270.00 L515.18 266.99 L517.19 264.11 L519.40 261.37 L521.78 258.75 L524.32 256.26 L527.00 253.89 L529.81 251.64 L532.73 249.50 L535.75 247.47 L538.84 245.54Z" fill="none" stroke="#6270d8" stroke-width="1.4" opacity="0.85"/>
<path d="M541.70 255.79 L542.85 255.20 L544.02 254.63 L545.19 254.05 L546.37 253.49 L547.56 252.93 L548.75 252.37 L549.95 251.83 L551.16 251.29 L552.37 250.77 L553.59 250.25 L554.81 249.74 L556.04 249.25 L557.27 248.76 L558.51 248.28 L559.75 247.82 L560.99 247.37 L562.24 246.93 L563.49 246.50 L564.75 246.09 L566.01 245.70 L567.27 245.31 L568.53 244.94 L569.80 244.59 L571.07 244.25 L572.34 243.93 L573.61 243.63 L574.88 243.34 L576.16 243.07 L577.43 242.82 L578.71 242.59 L579.99 242.38 L581.26 242.18 L582.54 242.01 L583.82 241.86 L585.09 241.73 L586.37 241.62 L587.64 241.53 L588.92 241.46 L590.19 241.42 L591.46 241.40 L592.73 241.40 L594.00 241.43 L595.26 241.48 L596.52 241.56 L597.78 241.66 L599.03 241.79 L600.29 241.95 L601.54 242.13 L602.78 242.34 L604.02 242.58 L605.26 242.84 L606.50 243.12 L607.73 243.42 L608.96 243.75 L610.19 244.09 L611.42 244.45 L612.64 244.83 L613.87 245.23 L615.09 245.64 L616.32 246.07 L617.54 246.51 L618.76 246.96 L619.98 247.43 L621.20 247.90 L622.43 248.38 L623.65 248.87 L624.87 249.37 L626.10 249.88 L627.32 250.39 L628.55 250.90 L629.78 251.41 L631.01 251.93 L632.25 252.45 L633.48 252.96 L634.72 253.48 L635.96 253.99 L637.21 254.50 L638.46 255.01 L639.71 255.50 L640.97 255.99 L642.23 256.48 L643.49 256.96 L644.74 257.44 L645.99 257.92 L647.22 258.42 L648.43 258.94 L649.62 259.47 L650.78 260.04 L651.90 260.64 L652.99 261.27 L654.02 261.96 L655.01 262.69 L655.95 263.47 L656.82 264.31 L657.63 265.22 L658.37 266.20 L659.04 267.24 L659.64 268.33 L660.17 269.47 L660.62 270.65 L661.00 271.87 L661.31 273.12 L661.54 274.39 L661.69 275.69 L661.78 276.99 L661.81 278.31 L661.78 279.64 L661.71 280.98 L661.60 282.32 L661.45 283.66 L661.28 285.00 L661.09 286.33 L660.88 287.66 L660.66 288.97 L660.44 290.27 L660.21 291.56 L659.96 292.83 L659.70 294.10 L659.42 295.35 L659.12 296.59 L658.80 297.82 L658.45 299.04 L658.07 300.25 L657.65 301.45 L657.21 302.64 L656.72 303.82 L656.20 304.99 L655.63 306.16 L655.01 307.31 L654.36 308.46 L653.67 309.60 L652.96 310.74 L652.23 311.87 L651.49 313.01 L650.75 314.14 L650.01 315.28 L649.29 316.41 L648.58 317.56 L647.90 318.71 L647.26 319.86 L646.65 321.02 L646.09 322.19 L645.57 323.37 L645.10 324.56 L644.66 325.76 L644.26 326.96 L643.90 328.17 L643.57 329.39 L643.28 330.61 L643.03 331.84 L642.81 333.08 L642.62 334.32 L642.46 335.57 L642.33 336.82 L642.23 338.08 L642.16 339.34 L642.11 340.61 L642.10 341.88 L642.10 343.15 L642.13 344.43 L642.18 345.71 L642.26 346.99 L642.35 348.28 L642.46 349.56 L642.59 350.85 L642.74 352.15 L642.91 353.44 L643.09 354.73 L643.28 356.03 L643.49 357.32 L643.70 358.62 L643.93 359.91 L644.17 361.20 L644.42 362.50 L644.67 363.79 L644.93 365.08 L645.20 366.37 L645.47 367.66 L645.74 368.95 L646.01 370.23 L646.29 371.51 L646.57 372.79 L646.84 374.06 L647.12 375.34 L647.40 376.61 L647.68 377.88 L647.96 379.14 L648.23 380.41 L648.51 381.67 L648.79 382.94 L649.07 384.20 L649.34 385.46 L649.61 386.72 L649.89 387.98 L650.16 389.24 L650.43 390.49 L650.70 391.75 L650.96 393.01 L651.22 394.27 L651.48 395.52 L651.74 396.78 L652.00 398.04 L652.25 399.30 L652.50 400.55 L652.75 401.81 L652.99 403.08 L653.23 404.34 L653.46 405.60 L653.70 406.86 L653.92 408.13 L654.14 409.40 L654.36 410.67 L654.58 411.94 L654.78 413.21 L654.99 414.49 L655.18 415.77 L655.37 417.05 L655.55 418.33 L655.72 419.61 L655.88 420.90 L656.03 422.19 L656.17 423.48 L656.29 424.77 L656.40 426.06 L656.49 427.36 L656.57 428.65 L656.64 429.95 L656.68 431.25 L656.71 432.55 L656.72 433.86 L656.71 435.16 L656.67 436.47 L656.62 437.78 L656.54 439.09 L656.44 440.40 L656.32 441.71 L656.17 443.03 L655.99 444.34 L655.79 445.66 L655.55 446.98 L655.29 448.30 L655.00 449.61 L654.67 450.92 L654.31 452.21 L653.91 453.48 L653.46 454.72 L652.97 455.93 L652.44 457.10 L651.85 458.22 L651.21 459.30 L650.51 460.32 L649.76 461.28 L648.96 462.18 L648.10 463.04 L647.20 463.84 L646.26 464.61 L645.28 465.32 L644.25 466.00 L643.19 466.64 L642.10 467.24 L640.97 467.81 L639.82 468.35 L638.64 468.86 L637.44 469.34 L636.22 469.81 L634.98 470.25 L633.73 470.68 L632.46 471.09 L631.19 471.49 L629.91 471.88 L628.62 472.27 L627.33 472.65 L626.04 473.03 L624.76 473.41 L623.48 473.79 L622.20 474.17 L620.92 474.56 L619.65 474.94 L618.38 475.32 L617.11 475.71 L615.85 476.09 L614.59 476.47 L613.33 476.86 L612.07 477.24 L610.82 477.62 L609.56 478.00 L608.31 478.38 L607.06 478.76 L605.81 479.13 L604.57 479.50 L603.32 479.87 L602.08 480.24 L600.83 480.61 L599.59 480.97 L598.35 481.33 L597.11 481.69 L595.87 482.05 L594.63 482.40 L593.39 482.74 L592.15 483.09 L590.92 483.42 L589.68 483.76 L588.44 484.09 L587.20 484.41 L585.96 484.73 L584.72 485.05 L583.48 485.36 L582.24 485.66 L581.00 485.96 L579.75 486.25 L578.51 486.54 L577.26 486.81 L576.02 487.09 L574.77 487.35 L573.52 487.61 L572.27 487.86 L571.01 488.11 L569.76 488.35 L568.50 488.58 L567.24 488.80 L565.98 489.01 L564.71 489.21 L563.44 489.41 L562.17 489.60 L560.90 489.78 L559.62 489.94 L558.35 490.10 L557.06 490.26 L555.78 490.40 L554.49 490.53 L553.20 490.66 L551.91 490.77 L550.62 490.88 L549.32 490.98 L548.02 491.07 L546.72 491.16 L545.42 491.24 L544.12 491.31 L542.81 491.37 L541.51 491.43 L540.20 491.48 L538.89 491.53 L537.59 491.57 L536.28 491.60 L534.97 491.63 L533.66 491.65 L532.35 491.67 L531.04 491.68 L529.73 491.69 L528.42 491.69 L527.11 491.68 L525.80 491.68 L524.49 491.67 L523.18 491.65 L521.88 491.63 L520.57 491.61 L519.26 491.59 L517.96 491.56 L516.66 491.53 L515.36 491.49 L514.06 491.45 L512.76 491.42 L511.47 491.37 L510.17 491.33 L508.88 491.29 L507.60 491.24 L506.31 491.19 L505.03 491.14 L503.75 491.08 L502.47 491.02 L501.19 490.95 L499.92 490.87 L498.65 490.78 L497.38 490.67 L496.11 490.55 L494.85 490.41 L493.58 490.26 L492.33 490.08 L491.07 489.89 L489.81 489.67 L488.56 489.42 L487.31 489.15 L486.06 488.84 L484.81 488.51 L483.57 488.15 L482.33 487.76 L481.10 487.34 L479.87 486.89 L478.64 486.42 L477.43 485.91 L476.22 485.38 L475.03 484.82 L473.84 484.23 L472.67 483.62 L471.51 482.98 L470.36 482.32 L469.23 481.63 L468.11 480.91 L467.01 480.18 L465.93 479.41 L464.86 478.63 L463.82 477.82 L462.79 476.99 L461.79 476.14 L460.80 475.26 L459.84 474.36 L458.91 473.45 L458.00 472.51 L457.12 471.55 L456.26 470.57 L455.43 469.57 L454.63 468.56 L453.86 467.52 L453.12 466.47 L452.41 465.40 L451.74 464.31 L451.10 463.20 L450.49 462.08 L449.92 460.94 L449.39 459.79 L448.89 458.62 L448.43 457.43 L448.01 456.23 L447.63 455.02 L447.29 453.79 L446.99 452.55 L446.73 451.30 L446.50 450.04 L446.30 448.77 L446.13 447.49 L445.99 446.20 L445.88 444.91 L445.79 443.60 L445.72 442.30 L445.67 440.99 L445.65 439.67 L445.64 438.36 L445.64 437.04 L445.66 435.72 L445.69 434.40 L445.73 433.08 L445.78 431.76 L445.84 430.45 L445.91 429.14 L445.99 427.83 L446.09 426.52 L446.20 425.22 L446.33 423.92 L446.48 422.63 L446.64 421.34 L446.83 420.06 L447.04 418.78 L447.26 417.51 L447.51 416.25 L447.79 414.99 L448.09 413.74 L448.42 412.50 L448.77 411.27 L449.15 410.05 L449.56 408.83 L449.99 407.62 L450.44 406.41 L450.92 405.22 L451.41 404.02 L451.91 402.83 L452.43 401.65 L452.96 400.47 L453.50 399.29 L454.05 398.11 L454.61 396.94 L455.17 395.76 L455.74 394.59 L456.30 393.42 L456.86 392.24 L457.42 391.07 L457.98 389.89 L458.53 388.71 L459.07 387.53 L459.61 386.34 L460.15 385.16 L460.69 383.97 L461.22 382.79 L461.76 381.61 L462.30 380.43 L462.85 379.26 L463.40 378.09 L463.96 376.92 L464.53 375.77 L465.11 374.61 L465.70 373.47 L466.31 372.33 L466.93 371.20 L467.56 370.08 L468.21 368.97 L468.88 367.87 L469.56 366.78 L470.26 365.69 L470.97 364.62 L471.69 363.55 L472.43 362.49 L473.18 361.44 L473.93 360.39 L474.69 359.34 L475.47 358.30 L476.25 357.27 L477.03 356.23 L477.82 355.20 L478.61 354.18 L479.41 353.15 L480.20 352.12 L481.00 351.10 L481.80 350.07 L482.60 349.05 L483.39 348.02 L484.19 346.99 L484.98 345.96 L485.76 344.92 L486.54 343.89 L487.32 342.85 L488.09 341.80 L488.85 340.76 L489.61 339.71 L490.37 338.66 L491.12 337.60 L491.87 336.54 L492.61 335.48 L493.35 334.42 L494.08 333.35 L494.81 332.28 L495.53 331.21 L496.25 330.13 L496.96 329.05 L497.67 327.97 L498.37 326.88 L499.06 325.79 L499.75 324.70 L500.44 323.60 L501.12 322.50 L501.79 321.39 L502.46 320.29 L503.12 319.17 L503.77 318.06 L504.42 316.94 L505.07 315.82 L505.71 314.69 L506.34 313.56 L506.97 312.43 L507.59 311.30 L508.21 310.16 L508.83 309.03 L509.44 307.89 L510.05 306.75 L510.65 305.60 L511.25 304.46 L511.85 303.31 L512.45 302.17 L513.05 301.02 L513.64 299.88 L514.22 298.73 L514.80 297.57 L515.36 296.41 L515.91 295.25 L516.45 294.08 L516.97 292.90 L517.47 291.71 L517.95 290.51 L518.41 289.31 L518.84 288.09 L519.26 286.86 L519.66 285.62 L520.05 284.38 L520.44 283.13 L520.82 281.88 L521.21 280.64 L521.61 279.39 L522.02 278.14 L522.45 276.91 L522.90 275.67 L523.38 274.45 L523.89 273.24 L524.43 272.04 L525.01 270.86 L525.63 269.71 L526.28 268.58 L526.98 267.48 L527.71 266.42 L528.48 265.40 L529.30 264.42 L530.15 263.50 L531.05 262.63 L531.99 261.80 L532.97 261.02 L533.98 260.27 L535.02 259.56 L536.08 258.88 L537.17 258.23 L538.28 257.60 L539.40 256.98 L540.54 256.38Z" fill="none" stroke="#6270d8" stroke-width="1.4" opacity="0.85"/>
<g fill="none" stroke="#5262b4" stroke-width="1">
<rect x="434.5" y="228.5" width="239" height="285"/>
</g>
<g fill="#fff" stroke="#5262b4" stroke-width="1">
<rect x="431.5" y="225.5" width="5" height="5"/><rect x="550.5" y="225.5" width="5" height="5"/><rect x="670.5" y="225.5" width="5" height="5"/>
<rect x="431.5" y="368.5" width="5" height="5"/><rect x="670.5" y="368.5" width="5" height="5"/>
<rect x="431.5" y="510.5" width="5" height="5"/><rect x="550.5" y="510.5" width="5" height="5"/><rect x="670.5" y="510.5" width="5" height="5"/>
</g>
</svg>
</body></html>
